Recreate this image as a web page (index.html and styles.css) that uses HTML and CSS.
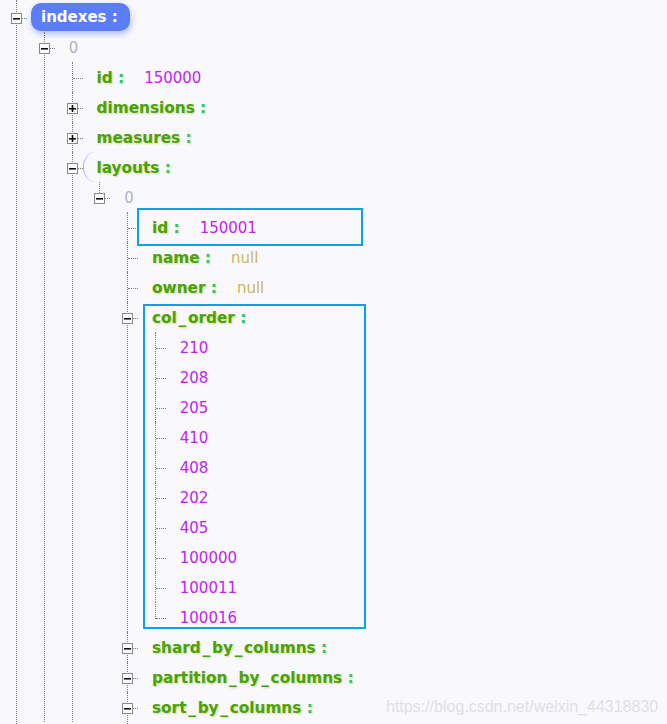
FILE: index.html
```html
<!DOCTYPE html>
<html>
<head>
<meta charset="utf-8">
<link rel="stylesheet" href="styles.css">
</head>
<body>
<div class="tree">
  <ul class="root">
    <li class="node">
      <span class="sw"><svg width="11" height="11" viewBox="0 0 11 11"><rect x="0.5" y="0.5" width="10" height="10" fill="#fdfdfd" stroke="#8a8a8a"/><rect x="2" y="5" width="7" height="1.6" fill="#111"/></svg></span>
      <div class="row"><span class="pill">indexes :</span></div>
      <ul>
        <li class="node">
          <span class="sw"><svg width="11" height="11" viewBox="0 0 11 11"><rect x="0.5" y="0.5" width="10" height="10" fill="#fdfdfd" stroke="#8a8a8a"/><rect x="2" y="5" width="7" height="1.6" fill="#111"/></svg></span>
          <div class="row"><span class="idx">0</span></div>
          <ul>
            <li><div class="row"><span class="k">id <b class="c">:</b></span><span class="v">150000</span></div></li>
            <li class="node">
              <span class="sw"><svg width="11" height="11" viewBox="0 0 11 11"><rect x="0.5" y="0.5" width="10" height="10" fill="#fdfdfd" stroke="#8a8a8a"/><rect x="2" y="5" width="7" height="1.6" fill="#111"/><rect x="4.7" y="2" width="1.6" height="7" fill="#111"/></svg></span>
              <div class="row"><span class="k">dimensions <b class="c">:</b></span></div>
            </li>
            <li class="node">
              <span class="sw"><svg width="11" height="11" viewBox="0 0 11 11"><rect x="0.5" y="0.5" width="10" height="10" fill="#fdfdfd" stroke="#8a8a8a"/><rect x="2" y="5" width="7" height="1.6" fill="#111"/><rect x="4.7" y="2" width="1.6" height="7" fill="#111"/></svg></span>
              <div class="row"><span class="k">measures <b class="c">:</b></span></div>
            </li>
            <li class="node">
              <span class="sw"><svg width="11" height="11" viewBox="0 0 11 11"><rect x="0.5" y="0.5" width="10" height="10" fill="#fdfdfd" stroke="#8a8a8a"/><rect x="2" y="5" width="7" height="1.6" fill="#111"/></svg></span>
              <span class="arc"></span>
              <div class="row"><span class="k">layouts <b class="c">:</b></span></div>
              <ul>
                <li class="node last">
                  <span class="sw"><svg width="11" height="11" viewBox="0 0 11 11"><rect x="0.5" y="0.5" width="10" height="10" fill="#fdfdfd" stroke="#8a8a8a"/><rect x="2" y="5" width="7" height="1.6" fill="#111"/></svg></span>
                  <div class="row"><span class="idx">0</span></div>
                  <ul>
                    <li><div class="row"><span class="k">id <b class="c">:</b></span><span class="v">150001</span></div></li>
                    <li><div class="row"><span class="k">name <b class="c">:</b></span><span class="v null">null</span></div></li>
                    <li><div class="row"><span class="k">owner <b class="c">:</b></span><span class="v null">null</span></div></li>
                    <li class="node">
                      <span class="sw"><svg width="11" height="11" viewBox="0 0 11 11"><rect x="0.5" y="0.5" width="10" height="10" fill="#fdfdfd" stroke="#8a8a8a"/><rect x="2" y="5" width="7" height="1.6" fill="#111"/></svg></span>
                      <div class="row"><span class="k">col<span class="us">_</span>order <b class="c">:</b></span></div>
                      <ul>
                        <li><div class="row"><span class="n">210</span></div></li>
                        <li><div class="row"><span class="n">208</span></div></li>
                        <li><div class="row"><span class="n">205</span></div></li>
                        <li><div class="row"><span class="n">410</span></div></li>
                        <li><div class="row"><span class="n">408</span></div></li>
                        <li><div class="row"><span class="n">202</span></div></li>
                        <li><div class="row"><span class="n">405</span></div></li>
                        <li><div class="row"><span class="n">100000</span></div></li>
                        <li><div class="row"><span class="n">100011</span></div></li>
                        <li class="last"><div class="row"><span class="n">100016</span></div></li>
                      </ul>
                    </li>
                    <li class="node">
                      <span class="sw"><svg width="11" height="11" viewBox="0 0 11 11"><rect x="0.5" y="0.5" width="10" height="10" fill="#fdfdfd" stroke="#8a8a8a"/><rect x="2" y="5" width="7" height="1.6" fill="#111"/></svg></span>
                      <div class="row"><span class="k">shard<span class="us">_</span>by<span class="us">_</span>columns <b class="c">:</b></span></div>
                    </li>
                    <li class="node">
                      <span class="sw"><svg width="11" height="11" viewBox="0 0 11 11"><rect x="0.5" y="0.5" width="10" height="10" fill="#fdfdfd" stroke="#8a8a8a"/><rect x="2" y="5" width="7" height="1.6" fill="#111"/></svg></span>
                      <div class="row"><span class="k">partition<span class="us">_</span>by<span class="us">_</span>columns <b class="c">:</b></span></div>
                    </li>
                    <li class="node more">
                      <span class="sw"><svg width="11" height="11" viewBox="0 0 11 11"><rect x="0.5" y="0.5" width="10" height="10" fill="#fdfdfd" stroke="#8a8a8a"/><rect x="2" y="5" width="7" height="1.6" fill="#111"/></svg></span>
                      <div class="row"><span class="k">sort<span class="us">_</span>by<span class="us">_</span>columns <b class="c">:</b></span></div>
                    </li>
                  </ul>
                </li>
              </ul>
            </li>
          </ul>
        </li>
      </ul>
    </li>
  </ul>
</div>

<div class="mark mark-id"></div>
<div class="mark mark-col"></div>
<div class="watermark">https://blog.csdn.net/weixin_44318830</div>
</body>
</html>
```

FILE: styles.css
```css
html, body {
  margin: 0;
  padding: 0;
  height: 724px;
  overflow: hidden;
}
body {
  background: #f9f9fd;
  font-family: "DejaVu Sans", Verdana, sans-serif;
  font-size: 15px;
  position: relative;
}
.tree ul {
  list-style: none;
  margin: 0 0 0 2.75px;
  padding: 0;
}
.tree ul.root {
  margin: 2px 0 0 0;
  padding-left: 16px;
}
.tree li {
  position: relative;
  padding-left: 25px;
}
.tree li::before {
  content: "";
  position: absolute;
  left: 0;
  top: 0;
  bottom: 0;
  border-left: 1px dotted #7c7c7c;
}
.root > li::before {
  top: -2px;
  bottom: -60px;
}
.tree li.more::before {
  bottom: -40px;
}
.tree li.last::before {
  bottom: auto;
  height: 17px;
}
.tree li::after {
  content: "";
  position: absolute;
  left: 1px;
  top: 16px;
  width: 10px;
  border-top: 1px dotted #7c7c7c;
}
.sw {
  position: absolute;
  left: -5px;
  top: 11px;
  width: 11px;
  height: 11px;
  z-index: 2;
}
.sw svg {
  display: block;
}
.row {
  height: 29px;
  padding-top: 1px;
  line-height: 30px;
  white-space: nowrap;
}
.pill {
  display: inline-block;
  vertical-align: top;
  margin: 0 0 0 -10px;
  padding: 0 12px 0 10px;
  line-height: 28px;
  border-radius: 10px;
  background: #5b7df8;
  color: #fff;
  font-weight: bold;
  box-shadow: 1px 3px 6px rgba(80, 110, 240, 0.45);
}
.idx {
  color: #b2b2b8;
}
.k {
  color: #4aa306;
  font-weight: bold;
  font-size: 15.3px;
  text-shadow: 1px 1px 2px rgba(150, 175, 40, 0.45);
}
.us {
  padding: 0 1.75px;
}
.c {
  color: #22cc66;
}
.v {
  margin-left: 20px;
  color: #c41ef0;
}
.v.null {
  color: #c8b854;
}
.n {
  color: #c41ef0;
}
.arc {
  position: absolute;
  left: 11px;
  top: 0;
  width: 12px;
  height: 30px;
  box-sizing: border-box;
  border-left: 1.5px solid #9fb1f6;
  border-radius: 12px 0 0 12px / 15px 0 0 15px;
}
.mark {
  position: absolute;
  border: 2px solid #0aa3e8;
  box-sizing: border-box;
}
.mark-id {
  left: 137px;
  top: 208px;
  width: 226px;
  height: 38px;
}
.mark-col {
  left: 143px;
  top: 304px;
  width: 223px;
  height: 325px;
}
.watermark {
  position: absolute;
  left: 386px;
  top: 697px;
  font-family: "Liberation Sans", Arial, sans-serif;
  font-size: 16px;
  line-height: 20px;
  color: #e0e0e4;
}
```
